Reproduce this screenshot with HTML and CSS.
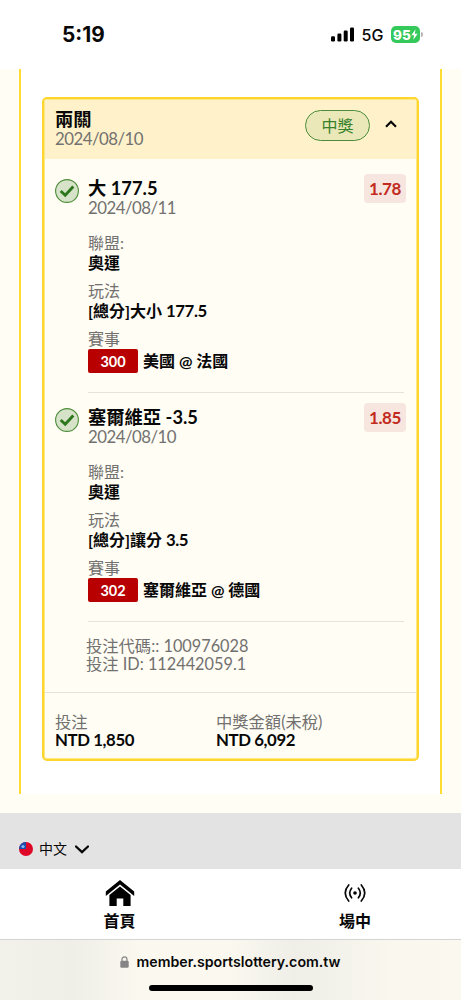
FILE: index.html
```html
<!DOCTYPE html>
<html lang="zh-Hant">
<head>
<meta charset="utf-8">
<meta name="viewport" content="width=device-width, initial-scale=1">
<title>投注紀錄</title>
<link rel="stylesheet" href="styles.css">
</head>
<body>
<div class="phone">
  <header class="status">
    <span class="clock">5:19</span>
    <div class="status-right">
      <svg class="signal" viewBox="0 0 23 15"><rect x="0" y="9.3" width="4" height="5.2" rx="1.2"/><rect x="6.4" y="6.5" width="4" height="8" rx="1.2"/><rect x="12.7" y="3.6" width="4" height="10.9" rx="1.2"/><rect x="19" y="0.4" width="4" height="14.1" rx="1.2"/></svg>
      <span class="network">5G</span>
      <div class="battery"><span>95</span><svg class="bolt" viewBox="0 0 7 11"><path d="M4.6 0.3 0.3 6.2H3.1L2.3 10.7 6.7 4.7H3.8Z"/></svg></div>
      <i class="battery-tip"></i>
    </div>
  </header>
  <main class="content">
    <section class="panel">
      <article class="card">
        <div class="card-head">
          <div class="head-text"><h2 class="title">兩關</h2><p class="date">2024/08/10</p></div>
          <span class="pill">中獎</span>
          <svg class="caret" viewBox="0 0 12 8"><path d="M1 6.8 6 1.8 11 6.8"/></svg>
        </div>
        <div class="legs">
          <section class="leg">
            <svg class="check" viewBox="0 0 24 24"><circle cx="12" cy="12" r="11.4"/><path d="m5.7 12 4.5 4.2 8.1-8.8"/></svg>
            <div class="leg-body">
              <div class="leg-top"><div><h3 class="title">大 177.5</h3><p class="date">2024/08/11</p></div><span class="odds">1.78</span></div>
              <dl class="fields">
                <div><dt>聯盟:</dt><dd>奧運</dd></div>
                <div><dt>玩法</dt><dd>[總分]大小 <span class="num">177.5</span></dd></div>
                <div><dt>賽事</dt><dd class="match"><span class="code">300</span>美國 @ 法國</dd></div>
              </dl>
            </div>
          </section>
          <section class="leg">
            <svg class="check" viewBox="0 0 24 24"><circle cx="12" cy="12" r="11.4"/><path d="m5.7 12 4.5 4.2 8.1-8.8"/></svg>
            <div class="leg-body">
              <div class="leg-top"><div><h3 class="title">塞爾維亞 -3.5</h3><p class="date">2024/08/10</p></div><span class="odds">1.85</span></div>
              <dl class="fields">
                <div><dt>聯盟:</dt><dd>奧運</dd></div>
                <div><dt>玩法</dt><dd>[總分]讓分 <span class="num">3.5</span></dd></div>
                <div><dt>賽事</dt><dd class="match"><span class="code">302</span>塞爾維亞 @ 德國</dd></div>
              </dl>
            </div>
          </section>
        </div>
        <div class="slip"><p>投注代碼:: 100976028</p><p>投注 ID: 112442059.1</p></div>
        <dl class="totals">
          <div><dt>投注</dt><dd class="num">NTD 1,850</dd></div>
          <div><dt>中獎金額(未稅)</dt><dd class="num">NTD 6,092</dd></div>
        </dl>
      </article>
    </section>
  </main>
  <div class="language">
    <svg class="flag" viewBox="0 0 14 14"><circle cx="7" cy="7" r="7" fill="#df0728"/><path d="M7 0A7 7 0 0 0 0 7H7Z" fill="#174fae"/><circle cx="4" cy="4.5" r="1.6" fill="#8fb5ef"/></svg>
    <span>中文</span>
    <svg class="lang-caret" viewBox="0 0 14 9"><path d="M1 1.5 7 7.2 13 1.5"/></svg>
  </div>
  <nav class="tabs">
    <a class="tab"><svg class="home" viewBox="0 0 30 27"><path d="M.8 11.5 15 0 29.2 11.5V16L15 4.4.8 16Z"/><path d="M4.4 15 15 6.6 25.6 15V26H18.3V18.5H11.7V26H4.4Z"/></svg><span>首頁</span></a>
    <a class="tab"><svg class="live" viewBox="0 0 22 18"><circle cx="11" cy="9" r="1.8"/><path d="M7.6 4.2Q3.8 9 7.6 13.8M14.4 4.2Q18.2 9 14.4 13.8M4.7 1Q-2.2 9 4.7 17M17.3 1Q24.2 9 17.3 17"/></svg><span>場中</span></a>
  </nav>
  <footer class="browser">
    <div class="address"><svg class="lock" viewBox="0 0 9 12"><rect x="0.3" y="4.8" width="8.4" height="7" rx="1.2"/><path d="M2 5.3V3.3a2.5 2.5 0 0 1 5 0v2"/></svg><span>member.sportslottery.com.tw</span></div>
    <i class="indicator"></i>
  </footer>
</div>
</body>
</html>
```
FILE: styles.css
```css
* { box-sizing: border-box; }
body, h2, h3, p, dl, dd { margin: 0; }
body { background: #fff; color: #080808; font-family: Lato, "Noto Sans CJK TC", sans-serif; font-size: 16px; line-height: 20px; }
svg { display: block; flex: none; }
.phone { width: 461px; height: 1000px; display: flex; flex-direction: column; overflow: hidden; }

.status { height: 69px; flex: none; display: flex; justify-content: space-between; padding: 24px 38px 0 62px; font-family: Inter, sans-serif; }
.clock { font-size: 20.8px; font-weight: 700; line-height: 22px; }
.status-right { display: flex; align-items: center; height: 21px; }
.signal { width: 23px; height: 15px; }
.network { margin-left: 7.5px; width: 22.5px; font-size: 16px; font-weight: 500; }
.battery { display: flex; align-items: center; width: 29px; height: 17px; margin-left: 7px; padding-left: 2px; border-radius: 5px; background: #35c85a; color: #fff; font-size: 13.5px; font-weight: 800; }
.bolt { width: 7px; height: 11px; fill: #fff; }
.battery-tip { width: 2px; height: 5px; margin-left: 1px; border-radius: 0 2px 2px 0; background: #b5b5b5; }

.content { height: 744px; flex: none; padding: 0 19px 19px; background: #fffdf4; }
.panel { height: 725px; padding: 28px 21px 0; background: #fff; border: solid #ffdc32; border-width: 0 2px; }
.card { height: 664px; background: #fffdf4; border: 2px solid #ffd52f; border-radius: 5px; box-shadow: inset 0 0 0 1px #ffe980; }
.card-head { display: flex; height: 59px; margin: 1px 1px 0; padding: 9px 19px 0 10px; background: #fff2ca; border-radius: 3px 3px 0 0; }
.head-text { flex: 1; }
.title { font-size: 18.3px; line-height: 20px; font-weight: 700; white-space: nowrap; }
.date { font-size: 16.8px; line-height: 19px; letter-spacing: -.5px; color: #727170; }
.num { font-size: 16.8px; letter-spacing: -.4px; }
.pill { width: 65px; height: 31px; margin-top: 1px; border: 1px solid #4b8c38; border-radius: 16px; background: #eae8b9; color: #38812a; text-align: center; line-height: 29px; }
.caret { width: 12px; height: 8px; margin: 11px 0 0 15px; fill: none; stroke: #080808; stroke-width: 2.2; }

.legs { padding: 0 13px 0 11px; }
.leg { display: flex; height: 228.5px; padding-top: 14px; }
.leg:first-child { height: 234px; padding-top: 19px; }
.check { width: 24px; height: 24px; margin: 1px 9px 0 0; }
.check circle { fill: #d6e3c9; stroke: #4b8c38; stroke-width: 1.1; }
.check path { fill: none; stroke: #2c761b; stroke-width: 2.9; }
.leg-body { flex: 1; border-bottom: 1px solid #e4e3dd; }
.leg-top { display: flex; justify-content: space-between; height: 40px; }
.odds { width: 42px; height: 29px; margin: -4px -2px 0 0; border-radius: 4px; background: #f7e6df; color: #c22a20; font-size: 17px; letter-spacing: -.4px; font-weight: 700; line-height: 29px; text-align: center; }
.fields { display: flex; flex-direction: column; gap: 8px; margin-top: 15px; }
.fields div { height: 40px; }
dt { color: #727170; }
dd { font-weight: 700; }
.match { display: flex; align-items: center; height: 24px; gap: 5px; }
.code { width: 50px; height: 24px; border-radius: 2px; background: #b80000; color: #fff; font-size: 14.5px; line-height: 25px; text-align: center; }
.slip { height: 71px; margin: 0 1px; padding: 15.5px 0 0 41px; border-bottom: 1px solid #e4e3dd; color: #727170; font-size: 16.3px; line-height: 18px; }
.totals { display: flex; padding: 20.5px 11px 0; line-height: 18px; }
.totals div { width: 161px; white-space: nowrap; }
.totals dt { font-size: 16.3px; }

.language { display: flex; align-items: center; height: 56px; flex: none; padding: 16px 19px 0; background: #e3e3e3; font-size: 14px; }
.flag { width: 14px; height: 14px; margin-right: 6px; }
.lang-caret { width: 14px; height: 9px; margin-left: 8px; fill: none; stroke: #080808; stroke-width: 2.3; stroke-linecap: round; }
.tabs { display: grid; grid-template-columns: 235px 236px; height: 71px; flex: none; padding-left: 2px; border-bottom: 1px solid #d4d4d2; font-weight: 700; }
.tab { display: flex; flex-direction: column; align-items: center; padding-top: 11px; }
.tab span { margin-top: auto; margin-bottom: 8px; }
.home { width: 30px; height: 27px; }
.live { width: 22px; height: 18px; margin-top: 4px; }
.live path { fill: none; stroke: #080808; stroke-width: 1.7; stroke-linecap: round; }
.browser { flex: 1; display: flex; flex-direction: column; align-items: center; justify-content: space-between; padding: 12px 0 9px; background: linear-gradient(90deg, #f3f2ea 0, #efeee7 15%, #faf8ef 30%, #faf8ef 50%, #efeee7 64%, #f9f7ee 85%, #faf8ef); font-family: Inter, sans-serif; font-size: 14.2px; font-weight: 600; }
.address { display: flex; align-items: center; gap: 7px; }
.lock { width: 9px; height: 12px; fill: #858585; }
.lock path { fill: none; stroke: #858585; stroke-width: 1.2; }
.indicator { width: 164px; height: 6px; border-radius: 3px; background: #000; }
```
